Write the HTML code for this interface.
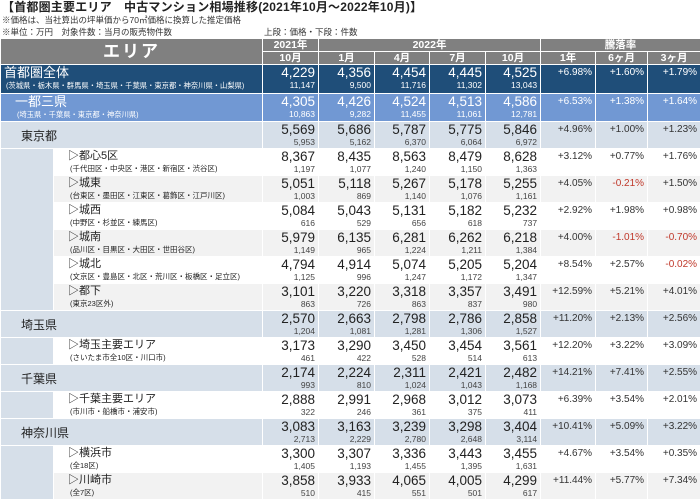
<!DOCTYPE html>
<html><head><meta charset="utf-8"><style>
*{margin:0;padding:0;box-sizing:border-box}
body{width:700px;height:499px;overflow:hidden;background:#fff;font-family:"Liberation Sans","Noto Sans CJK JP",sans-serif;color:#222;position:relative}
.t{position:absolute;left:2px;top:0px;font-size:12px;line-height:14px;font-weight:bold;white-space:nowrap;letter-spacing:0.2px}
.n{position:absolute;left:2px;font-size:8.5px;line-height:10px;color:#333;white-space:nowrap}
table{position:absolute;left:0;top:38px;width:700px;border-collapse:collapse;table-layout:fixed}
td,th{border:1.5px solid #fff;padding:0;overflow:hidden;white-space:nowrap}
th{background:#808080;color:#fff;font-size:10.5px;font-weight:bold;height:13px;line-height:11px;text-align:center}
th.area{font-size:17px;letter-spacing:2px}
td.v{text-align:right;padding-right:3px;vertical-align:top}
td.v b{display:block;font-weight:normal;font-size:13.5px;line-height:15px;padding-top:0px}
td.v i{display:block;font-style:normal;font-size:8.5px;line-height:10px;color:#444}
td.r{text-align:right;padding-right:3px;vertical-align:top;font-size:10px;line-height:14px;padding-top:1px;color:#333}
.neg{color:#c0392b!important}
tr.top td{background:#1f4e79;color:#fff}
tr.top td i,tr.top td.r{color:#fff}
tr.sec td{background:#7198d3;color:#fff}
tr.sec td i,tr.sec td.r{color:#fff}
tr.pref td{background:#d6dfe9}
.side{background:#d6dfe9}
tr.w td.c{background:#fff}
tr.g td.c{background:#f2f2f2}
td.lbl{vertical-align:top;font-size:11.5px;line-height:15px}
td.lbl small{display:block;font-size:7.3px;line-height:12px;padding-left:2px}
td.pl{font-size:12px;padding-left:20px;vertical-align:middle}
td.sl{padding-left:14px;vertical-align:top;font-size:11px;line-height:14px}
td.sl small{display:block;font-size:7.5px;line-height:12px;padding-left:2px}
</style></head><body>
<div class="t">【首都圏主要エリア　中古マンション相場推移(2021年10月～2022年10月)】</div>
<div class="n" style="top:15px">※価格は、当社算出の坪単価から70㎡価格に換算した推定価格</div>
<div class="n" style="top:27px">※単位：万円　対象件数：当月の販売物件数</div>
<div class="n" style="top:27px;left:264px">上段：価格・下段：件数</div>
<table>
<colgroup><col style="width:53px"><col style="width:209px"><col style="width:56px"><col style="width:56px"><col style="width:55px"><col style="width:56px"><col style="width:55px"><col style="width:55px"><col style="width:52px"><col style="width:53px"></colgroup>
<tr><th class="area" colspan="2" rowspan="2">エリア</th><th>2021年</th><th colspan="4">2022年</th><th colspan="3">騰落率</th></tr>
<tr><th>10月</th><th>1月</th><th>4月</th><th>7月</th><th>10月</th><th>1年</th><th>6ヶ月</th><th>3ヶ月</th></tr>
<tr class="top" style="height:29px"><td colspan="2" class="lbl" style="padding-left:3px;font-size:13px">首都圏全体<small>(茨城県・栃木県・群馬県・埼玉県・千葉県・東京都・神奈川県・山梨県)</small></td>
<td class="v"><b>4,229</b><i>11,147</i></td><td class="v"><b>4,356</b><i>9,500</i></td><td class="v"><b>4,454</b><i>11,716</i></td><td class="v"><b>4,445</b><i>11,302</i></td><td class="v"><b>4,525</b><i>13,043</i></td><td class="r">+6.98%</td><td class="r">+1.60%</td><td class="r">+1.79%</td></tr>
<tr class="sec" style="height:27px"><td colspan="2" class="lbl" style="padding-left:14px;font-size:13px">一都三県<small>(埼玉県・千葉県・東京都・神奈川県)</small></td>
<td class="v"><b>4,305</b><i>10,863</i></td><td class="v"><b>4,426</b><i>9,282</i></td><td class="v"><b>4,524</b><i>11,455</i></td><td class="v"><b>4,513</b><i>11,061</i></td><td class="v"><b>4,586</b><i>12,781</i></td><td class="r">+6.53%</td><td class="r">+1.38%</td><td class="r">+1.64%</td></tr>
<tr class="pref" style="height:27px"><td colspan="2" class="pl">東京都</td>
<td class="v"><b>5,569</b><i>5,953</i></td><td class="v"><b>5,686</b><i>5,162</i></td><td class="v"><b>5,787</b><i>6,370</i></td><td class="v"><b>5,775</b><i>6,064</i></td><td class="v"><b>5,846</b><i>6,972</i></td><td class="r">+4.96%</td><td class="r">+1.00%</td><td class="r">+1.23%</td></tr>
<tr class="w" style="height:27px"><td class="side" rowspan="6"></td><td class="sl c">▷都心5区<small>(千代田区・中央区・港区・新宿区・渋谷区)</small></td>
<td class="v c"><b>8,367</b><i>1,197</i></td><td class="v c"><b>8,435</b><i>1,077</i></td><td class="v c"><b>8,563</b><i>1,240</i></td><td class="v c"><b>8,479</b><i>1,150</i></td><td class="v c"><b>8,628</b><i>1,363</i></td><td class="r c">+3.12%</td><td class="r c">+0.77%</td><td class="r c">+1.76%</td></tr>
<tr class="g" style="height:27px"><td class="sl c">▷城東<small>(台東区・墨田区・江東区・葛飾区・江戸川区)</small></td>
<td class="v c"><b>5,051</b><i>1,003</i></td><td class="v c"><b>5,118</b><i>869</i></td><td class="v c"><b>5,267</b><i>1,140</i></td><td class="v c"><b>5,178</b><i>1,076</i></td><td class="v c"><b>5,255</b><i>1,161</i></td><td class="r c">+4.05%</td><td class="r c neg">-0.21%</td><td class="r c">+1.50%</td></tr>
<tr class="w" style="height:27px"><td class="sl c">▷城西<small>(中野区・杉並区・練馬区)</small></td>
<td class="v c"><b>5,084</b><i>616</i></td><td class="v c"><b>5,043</b><i>529</i></td><td class="v c"><b>5,131</b><i>656</i></td><td class="v c"><b>5,182</b><i>618</i></td><td class="v c"><b>5,232</b><i>737</i></td><td class="r c">+2.92%</td><td class="r c">+1.98%</td><td class="r c">+0.98%</td></tr>
<tr class="g" style="height:27px"><td class="sl c">▷城南<small>(品川区・目黒区・大田区・世田谷区)</small></td>
<td class="v c"><b>5,979</b><i>1,149</i></td><td class="v c"><b>6,135</b><i>965</i></td><td class="v c"><b>6,281</b><i>1,224</i></td><td class="v c"><b>6,262</b><i>1,211</i></td><td class="v c"><b>6,218</b><i>1,384</i></td><td class="r c">+4.00%</td><td class="r c neg">-1.01%</td><td class="r c neg">-0.70%</td></tr>
<tr class="w" style="height:27px"><td class="sl c">▷城北<small>(文京区・豊島区・北区・荒川区・板橋区・足立区)</small></td>
<td class="v c"><b>4,794</b><i>1,125</i></td><td class="v c"><b>4,914</b><i>996</i></td><td class="v c"><b>5,074</b><i>1,247</i></td><td class="v c"><b>5,205</b><i>1,172</i></td><td class="v c"><b>5,204</b><i>1,347</i></td><td class="r c">+8.54%</td><td class="r c">+2.57%</td><td class="r c neg">-0.02%</td></tr>
<tr class="g" style="height:27px"><td class="sl c">▷都下<small>(東京23区外)</small></td>
<td class="v c"><b>3,101</b><i>863</i></td><td class="v c"><b>3,220</b><i>726</i></td><td class="v c"><b>3,318</b><i>863</i></td><td class="v c"><b>3,357</b><i>837</i></td><td class="v c"><b>3,491</b><i>980</i></td><td class="r c">+12.59%</td><td class="r c">+5.21%</td><td class="r c">+4.01%</td></tr>
<tr class="pref" style="height:27px"><td colspan="2" class="pl">埼玉県</td>
<td class="v"><b>2,570</b><i>1,204</i></td><td class="v"><b>2,663</b><i>1,081</i></td><td class="v"><b>2,798</b><i>1,281</i></td><td class="v"><b>2,786</b><i>1,306</i></td><td class="v"><b>2,858</b><i>1,527</i></td><td class="r">+11.20%</td><td class="r">+2.13%</td><td class="r">+2.56%</td></tr>
<tr class="w" style="height:27px"><td class="side"></td><td class="sl c">▷埼玉主要エリア<small>(さいたま市全10区・川口市)</small></td>
<td class="v c"><b>3,173</b><i>461</i></td><td class="v c"><b>3,290</b><i>422</i></td><td class="v c"><b>3,450</b><i>528</i></td><td class="v c"><b>3,454</b><i>514</i></td><td class="v c"><b>3,561</b><i>613</i></td><td class="r c">+12.20%</td><td class="r c">+3.22%</td><td class="r c">+3.09%</td></tr>
<tr class="pref" style="height:27px"><td colspan="2" class="pl">千葉県</td>
<td class="v"><b>2,174</b><i>993</i></td><td class="v"><b>2,224</b><i>810</i></td><td class="v"><b>2,311</b><i>1,024</i></td><td class="v"><b>2,421</b><i>1,043</i></td><td class="v"><b>2,482</b><i>1,168</i></td><td class="r">+14.21%</td><td class="r">+7.41%</td><td class="r">+2.55%</td></tr>
<tr class="w" style="height:27px"><td class="side"></td><td class="sl c">▷千葉主要エリア<small>(市川市・船橋市・浦安市)</small></td>
<td class="v c"><b>2,888</b><i>322</i></td><td class="v c"><b>2,991</b><i>246</i></td><td class="v c"><b>2,968</b><i>361</i></td><td class="v c"><b>3,012</b><i>375</i></td><td class="v c"><b>3,073</b><i>411</i></td><td class="r c">+6.39%</td><td class="r c">+3.54%</td><td class="r c">+2.01%</td></tr>
<tr class="pref" style="height:27px"><td colspan="2" class="pl">神奈川県</td>
<td class="v"><b>3,083</b><i>2,713</i></td><td class="v"><b>3,163</b><i>2,229</i></td><td class="v"><b>3,239</b><i>2,780</i></td><td class="v"><b>3,298</b><i>2,648</i></td><td class="v"><b>3,404</b><i>3,114</i></td><td class="r">+10.41%</td><td class="r">+5.09%</td><td class="r">+3.22%</td></tr>
<tr class="w" style="height:27px"><td class="side" rowspan="2"></td><td class="sl c">▷横浜市<small>(全18区)</small></td>
<td class="v c"><b>3,300</b><i>1,405</i></td><td class="v c"><b>3,307</b><i>1,193</i></td><td class="v c"><b>3,336</b><i>1,455</i></td><td class="v c"><b>3,443</b><i>1,395</i></td><td class="v c"><b>3,455</b><i>1,631</i></td><td class="r c">+4.67%</td><td class="r c">+3.54%</td><td class="r c">+0.35%</td></tr>
<tr class="g" style="height:27px"><td class="sl c">▷川崎市<small>(全7区)</small></td>
<td class="v c"><b>3,858</b><i>510</i></td><td class="v c"><b>3,933</b><i>415</i></td><td class="v c"><b>4,065</b><i>551</i></td><td class="v c"><b>4,005</b><i>501</i></td><td class="v c"><b>4,299</b><i>617</i></td><td class="r c">+11.44%</td><td class="r c">+5.77%</td><td class="r c">+7.34%</td></tr>
</table>
</body></html>
